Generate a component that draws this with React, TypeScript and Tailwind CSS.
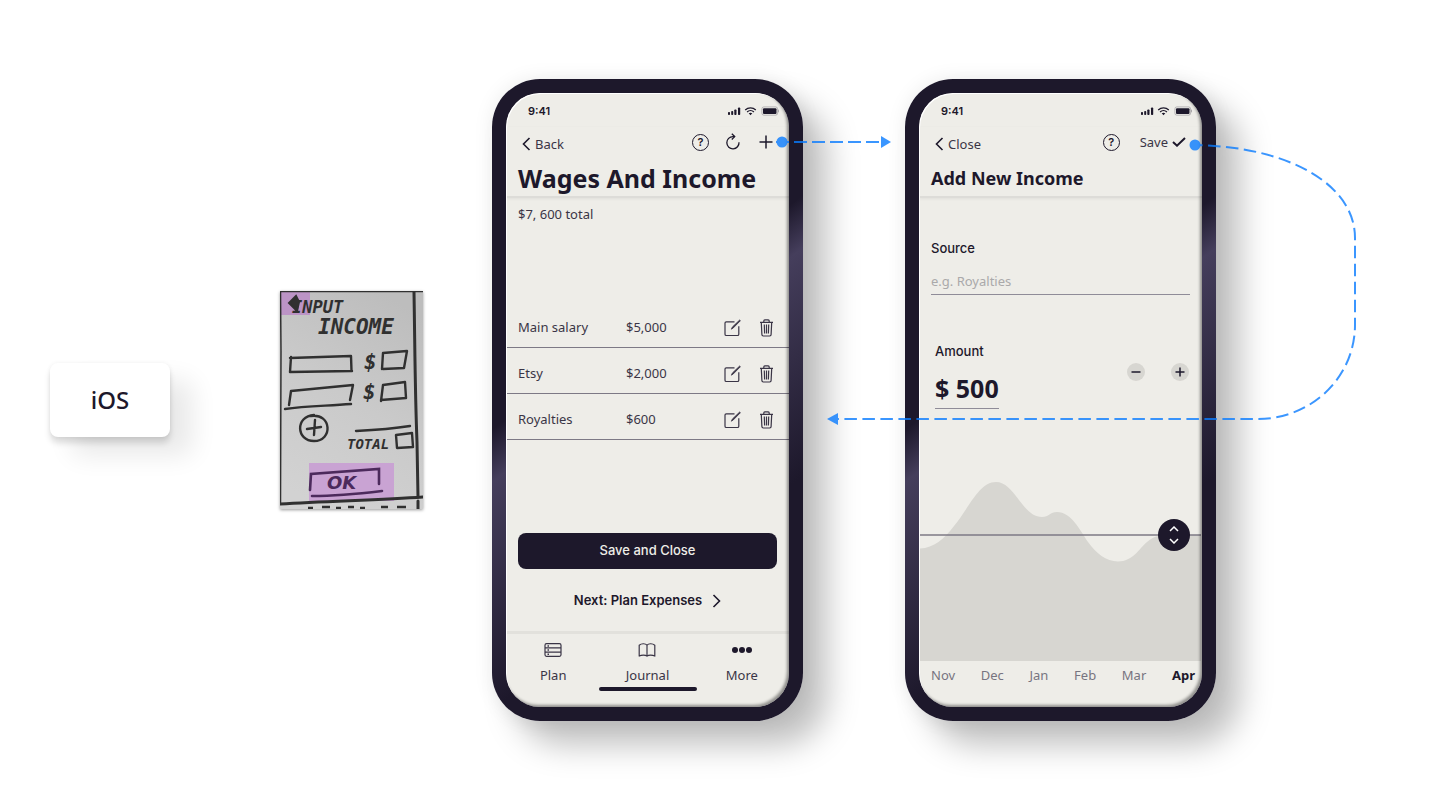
import type { ReactNode } from "react";

const entries = [
  { name: "Main salary", amount: "$5,000" },
  { name: "Etsy", amount: "$2,000" },
  { name: "Royalties", amount: "$600" },
];

const months = ["Nov", "Dec", "Jan", "Feb", "Mar", "Apr"];

function ChevronLeft() {
  return (
    <svg width="9" height="14" viewBox="0 0 9 14" fill="none" stroke="currentColor" strokeWidth="1.6" aria-hidden="true">
      <path d="M7.5 1 1.5 7l6 6" />
    </svg>
  );
}

function ChevronRight() {
  return (
    <svg width="9" height="14" viewBox="0 0 9 14" fill="none" stroke="currentColor" strokeWidth="1.6" aria-hidden="true">
      <path d="m1.5 1 6 6-6 6" />
    </svg>
  );
}

function HelpButton() {
  return (
    <button
      type="button"
      title="Help"
      className="flex size-[17px] items-center justify-center rounded-full border border-[#1d182b] font-['Inter',sans-serif] text-[11px] leading-none font-semibold"
    >
      ?
    </button>
  );
}

function RefreshIcon() {
  return (
    <svg width="16" height="18" viewBox="0 0 16 18" fill="none" stroke="currentColor" strokeWidth="1.3" aria-hidden="true">
      <path d="M14 9.2A6.1 6.1 0 1 1 8 3.6h1.6" />
      <path d="m6.8.8 2.9 2.8-2.9 2.9" />
    </svg>
  );
}

function PlusIcon() {
  return (
    <svg width="14" height="14" viewBox="0 0 14 14" fill="none" stroke="currentColor" strokeWidth="1.5" aria-hidden="true">
      <path d="M7 .5v13M.5 7h13" />
    </svg>
  );
}

function EditIcon() {
  return (
    <svg width="17" height="18" viewBox="0 0 17 18" fill="none" stroke="currentColor" aria-hidden="true">
      <path d="M10.5 2.8H2.3A1.3 1.3 0 0 0 1 4.1v11.1a1.3 1.3 0 0 0 1.3 1.3h11.2a1.3 1.3 0 0 0 1.3-1.3V7.2" strokeWidth="1.2" />
      <path d="m7.4 10.2 1-2.2L15.7 1l.7.7-7.1 7.2z" fill="currentColor" strokeWidth=".8" />
    </svg>
  );
}

function TrashIcon() {
  return (
    <svg width="15" height="18" viewBox="0 0 15 18" fill="none" stroke="currentColor" strokeWidth="1.2" aria-hidden="true">
      <path d="M1 3.4h13M4.8 3.2V1.9c0-.6.4-1 1-1h3.4c.6 0 1 .4 1 1v1.3M2.300 3.600l.6 12c0 .8.6 1.400 1.400 1.400h6.400c.8 0 1.400-.6 1.400-1.400l.6-12M5.300 5.600l.3 9M7.500 5.600v9M9.700 5.600l-.3 9" />
    </svg>
  );
}

function PlanIcon() {
  return (
    <svg width="18" height="14" viewBox="0 0 18 14" fill="none" stroke="currentColor" strokeWidth="1.2" aria-hidden="true">
      <rect x="1" y=".7" width="16" height="12.6" rx="1.5" />
      <path d="M1 4.9h16M1 9.1h16" />
      <path d="M3.500 2.900h1.500M3.500 7h1.500M3.500 11.200h1.500" strokeWidth="1.5" />
    </svg>
  );
}

function JournalIcon() {
  return (
    <svg width="18" height="14" viewBox="0 0 18 14" fill="none" stroke="currentColor" strokeWidth="1.2" strokeLinejoin="round" aria-hidden="true">
      <path d="M9 2.200C7.500.4 3.500.2 1.200 2.200v10.900c2.300-1.300 6.300-1.300 7.800 0 1.500-1.300 5.500-1.300 7.800 0V2.200C14.500.2 10.500.4 9 2.200zM9 2.200v10.900" />
    </svg>
  );
}

function MoreIcon() {
  return (
    <svg width="20" height="14" viewBox="0 0 20 14" fill="#1d182b" aria-hidden="true">
      <circle cx="3" cy="7" r="3" />
      <circle cx="10" cy="7" r="3" />
      <circle cx="17" cy="7" r="3" />
    </svg>
  );
}

function StatusBar() {
  return (
    <div className="flex h-[34px] items-center justify-between pt-0.5 pr-[10px] pl-[22px]">
      <span className="font-['Inter',sans-serif] text-[11px] leading-4 font-semibold">9:41</span>
      <svg width="52" height="10" viewBox="0 0 52 10" aria-hidden="true">
        <g fill="#1d182b">
          <rect x="1" y="6" width="2" height="3" rx=".8" />
          <rect x="4.200" y="5" width="2" height="4" rx=".8" />
          <rect x="7.300" y="3.500" width="2.200" height="5.500" rx=".8" />
          <rect x="11" y="1.500" width="2.200" height="7.500" rx=".8" />
          <path d="m23.500 9.200-1.800-1.900c1-.8 2.600-.8 3.600 0z" />
          <rect x="36" y="2.200" width="13.500" height="5.800" rx="1" />
        </g>
        <g fill="none" stroke="#1d182b" strokeWidth="1.3">
          <path d="M18.200 3.900c3-2.800 7.600-2.800 10.600 0" />
          <path d="M20.100 6c1.900-1.800 4.900-1.800 6.800 0" />
        </g>
        <rect x="34.900" y=".9" width="15.700" height="8.300" rx="2" fill="none" stroke="#1d182b" strokeOpacity=".25" />
        <path d="M51.500 3.700v2.600" stroke="#1d182b" strokeOpacity=".3" />
      </svg>
    </div>
  );
}

function Phone({ label, children }: { label: string; children: ReactNode }) {
  return (
    <section
      aria-label={label}
      className="w-[311px] shrink-0 rounded-[48px] bg-[linear-gradient(143deg,#1d182b_40%,#453e5c_46%,#1d182b_72%)] p-[14px] shadow-[24px_24px_32px_rgba(0,0,0,0.25),0_0_20px_rgba(0,0,0,0.08)]"
    >
      <div className="relative flex min-h-[614px] flex-col overflow-hidden rounded-[34px] bg-[#eeede8]">
        <StatusBar />
        {children}
        <div className="pointer-events-none absolute inset-0 rounded-[34px] shadow-[inset_1px_1px_0_#fff,inset_-2px_-2px_3px_rgba(0,0,0,0.4)]" />
      </div>
    </section>
  );
}

function IncomePhone() {
  return (
    <Phone label="Wages and income">
      <header className="border-b-2 border-[#dddcd8] px-3 pb-px shadow-[0_1px_3px_rgba(0,0,0,0.06)]">
        <div className="flex h-[30px] items-center justify-between pr-1 pl-1">
          <button type="button" className="flex items-center gap-1 pt-1 text-[13px] leading-4">
            <ChevronLeft />
            <span className="text-[#3a3546]">Back</span>
          </button>
          <div className="flex items-center gap-4">
            <HelpButton />
            <button type="button" aria-label="Refresh"><RefreshIcon /></button>
            <button type="button" aria-label="Add income" className="pl-0.5"><PlusIcon /></button>
          </div>
        </div>
        <h1 className="mt-1 text-[25px] leading-[34px] font-bold whitespace-nowrap">Wages And Income</h1>
      </header>
      <p className="px-3 pt-1.5 text-[13px] leading-5 text-[#3a3546]">$7, 600 total</p>
      <table className="mt-[77px] w-full table-fixed border-collapse text-[13px] text-[#3a3546]">
        <tbody>
          {entries.map((entry) => (
            <tr key={entry.name} className="h-[46px] border-b border-[#7d7985]">
              <th scope="row" className="w-[120px] pt-2 pl-3 text-left font-normal">{entry.name}</th>
              <td className="pt-2">{entry.amount}</td>
              <td className="w-[65px] pt-2">
                <div className="flex items-center gap-[18px]">
                  <button type="button" aria-label={`Edit ${entry.name}`}><EditIcon /></button>
                  <button type="button" aria-label={`Delete ${entry.name}`}><TrashIcon /></button>
                </div>
              </td>
            </tr>
          ))}
        </tbody>
      </table>
      <div className="mt-auto flex flex-col items-stretch gap-5 px-3 pb-[18px] font-['Inter',sans-serif]">
        <button type="button" className="h-9 rounded-lg bg-[#1d182b] text-[13px] font-medium text-[#eeede8]">
          Save and Close
        </button>
        <a href="#plan" className="flex h-6 items-center justify-center gap-[10px] text-[13px] font-semibold">
          Next: Plan Expenses
          <ChevronRight />
        </a>
      </div>
      <nav className="border-t-3 border-[#e2e1dc] pb-4">
        <div className="grid grid-cols-3 pt-[9px] text-[13px] leading-5 text-[#3a3546]">
          <a href="#plan" className="flex flex-col items-center gap-2"><PlanIcon />Plan</a>
          <a href="#journal" className="flex flex-col items-center gap-2"><JournalIcon />Journal</a>
          <a href="#more" className="flex flex-col items-center gap-2"><MoreIcon />More</a>
        </div>
        <div className="mx-auto mt-0.5 h-1 w-[98px] rounded-full bg-[#1d182b]" />
      </nav>
    </Phone>
  );
}

function AddIncomePhone() {
  return (
    <Phone label="Add new income">
      <header className="border-b-2 border-[#dddcd8] px-3 pb-px shadow-[0_1px_3px_rgba(0,0,0,0.06)]">
        <div className="flex h-[30px] items-center justify-between pr-1 pl-1">
          <button type="button" className="flex items-center gap-1 pt-1 text-[13px] leading-4">
            <ChevronLeft />
            <span className="text-[#3a3546]">Close</span>
          </button>
          <div className="flex items-center gap-5">
            <HelpButton />
            <button type="button" className="flex items-center gap-1 text-[13px] leading-4">
              <span className="text-[#3a3546]">Save</span>
              <svg width="14" height="10" viewBox="0 0 14 10" fill="none" stroke="currentColor" strokeWidth="2" aria-hidden="true">
                <path d="m1 5 4 3.700L13 1" />
              </svg>
            </button>
          </div>
        </div>
        <h1 className="mt-1 text-lg leading-[34px] font-bold">Add New Income</h1>
      </header>
      <div className="flex flex-col px-3 pt-[38px]">
        <label htmlFor="source" className="font-['Inter',sans-serif] text-[13px] leading-6 font-medium">Source</label>
        <input
          id="source"
          placeholder="e.g. Royalties"
          className="mt-2 h-[27px] w-full border-b border-[#8f8c98] bg-transparent text-[13px] outline-none placeholder:text-[#aaa9aa]"
        />
      </div>
      <div className="flex items-center justify-between pt-11 pr-3 pl-4">
        <div className="flex flex-col">
          <label htmlFor="amount" className="font-['Inter',sans-serif] text-[13px] leading-6 font-medium">Amount</label>
          <input
            id="amount"
            defaultValue="$ 500"
            className="mt-1 h-[42px] w-16 border-b border-[#8f8c98] bg-transparent text-[25px] font-bold outline-none"
          />
        </div>
        <div className="flex gap-[26px] pr-px pb-1">
          <button type="button" aria-label="Decrease amount" className="flex size-[18px] items-center justify-center rounded-full bg-[#d7d6d1]">
            <svg width="10" height="10" viewBox="0 0 10 10" stroke="currentColor" strokeWidth="1.5" aria-hidden="true"><path d="M.5 5h9" /></svg>
          </button>
          <button type="button" aria-label="Increase amount" className="flex size-[18px] items-center justify-center rounded-full bg-[#d7d6d1]">
            <svg width="10" height="10" viewBox="0 0 10 10" stroke="currentColor" strokeWidth="1.5" aria-hidden="true"><path d="M.5 5h9M5 .5v9" /></svg>
          </button>
        </div>
      </div>
      <div className="relative mt-auto pr-px pl-px">
        <svg className="block h-[180px] w-full" viewBox="0 0 281 180" preserveAspectRatio="none" aria-hidden="true">
          <path
            d="M0 67.500C14 67 24 58 34 45 49 27 59 1 76 1c19 0 26 35 46 35 7 0 8-5 15-5 14 0 23 18 31 30 8 11 18 19.500 30 19.500 15 0 21-13 29-19.500 8-7 14-7 24-7h30v126H0z"
            fill="#d7d6d1"
          />
          <path d="M0 54h281" stroke="#7d7985" strokeWidth="1.5" />
        </svg>
        <button
          type="button"
          aria-label="Adjust amount"
          className="absolute top-[38px] right-3 flex size-8 items-center justify-center rounded-full bg-[#1d182b] text-white"
        >
          <svg width="12" height="18" viewBox="0 0 12 18" fill="none" stroke="currentColor" strokeWidth="1.5" aria-hidden="true">
            <path d="m2 5 4-4 4 4M2 13l4 4 4-4" />
          </svg>
        </button>
      </div>
      <div className="flex justify-between pt-1 pr-[7px] pb-[22px] pl-3 text-[13px] leading-5 text-[#777480]">
        {months.map((month) => (
          <button
            key={month}
            type="button"
            className={month === "Apr" ? "font-bold text-[#1d182b]" : ""}
          >
            {month}
          </button>
        ))}
      </div>
    </Phone>
  );
}

function PaperSketch() {
  return (
    <svg
      className="w-[143px] shrink-0 shadow-[0_1px_3px_rgba(0,0,0,0.4)]"
      viewBox="0 0 143 218"
      role="img"
      aria-label="Paper sketch of the income screen"
    >
      <defs>
        <linearGradient id="paper" x1="0.7" y1="0" x2="0.3" y2="1">
          <stop offset="0" stopColor="#bdbdbd" />
          <stop offset="0.5" stopColor="#cacaca" />
          <stop offset="1" stopColor="#d2d2d2" />
        </linearGradient>
        <clipPath id="sheet"><path d="M0 0h143v218H0z" /></clipPath>
      </defs>
      <g clipPath="url(#sheet)">
        <rect width="143" height="218" fill="url(#paper)" />
        <rect width="30" height="24" fill="#bc94c6" />
        <rect x="29" y="172" width="85" height="38" fill="#c9a3d3" />
        <g fill="none" stroke="#303030" strokeWidth="2.4" strokeLinecap="round" strokeLinejoin="round">
          <path d="M0 .5h143" strokeWidth="1.5" />
          <path d="M.5 0 1 60 .5 213" strokeWidth="1.5" />
          <path d="M134 1c1 60 1 100 3 150l1 55M138 210v8" strokeWidth="3" />
          <path d="M0 213c50-3 100-4 143-7" strokeWidth="3" />
          <path d="m11 66-1 15 62-1M10 67l61-2 .5 15" />
          <path d="m102 78 1-16 24-2-3 17-21 1" />
          <path d="m9 114 2-14 62-6-3 15M5 118c20-3 40-3 66-5" />
          <path d="m101 110 2-16 22-3 1 16-25 2" />
          <path d="M34 124c-19 1-18 26 0 26 19 0 18-28-3-25M35 129l-1 15M27 138l14-2" />
          <path d="M76 140c20-1 35-2 54-5M117 157l-1-13 16-2 1 14-16 1" />
        </g>
        <path d="m9 12 7-7 3 6-2 9z" fill="#303030" stroke="#303030" strokeWidth="2" />
        <g fill="#303030" className="font-['DejaVu_Sans_Mono',monospace] font-bold italic">
          <text x="12" y="22" fontSize="17">INPUT</text>
          <text x="38" y="43" fontSize="21">INCOME</text>
          <text x="84" y="78" fontSize="21">$</text>
          <text x="83" y="108" fontSize="21">$</text>
          <text x="67" y="158" fontSize="14">TOTAL</text>
        </g>
        <g fill="none" stroke="#4c2a5c" strokeWidth="2.6" strokeLinecap="round">
          <path d="m30 199 1-16 68-5v15M32 205c25 0 45-2 70-5" />
        </g>
        <text x="47" y="198" fontSize="18" fill="#4c2a5c" className="font-['DejaVu_Sans',sans-serif] font-bold italic">OK</text>
        <path d="M28 217h5M42 216h8M56 217h5M68 216h6M80 217h5M101 216h7M117 216h9" stroke="#303030" strokeWidth="2.5" />
      </g>
    </svg>
  );
}

function Connectors() {
  return (
    <svg
      className="pointer-events-none absolute top-0 left-0 h-[642px] w-[1440px]"
      viewBox="0 79 1440 642"
      fill="none"
      aria-hidden="true"
    >
      <g opacity="0.8" stroke="#0a7cff" strokeWidth="2">
        <path d="M776 142h105" strokeDasharray="13 5" />
        <path d="M1190 145h6C1290 147 1355 185 1355 238V325A97 94 0 0 1 1258 419H838" strokeDasharray="12.500 5.500" />
        <g fill="#0a7cff" stroke="none">
          <circle cx="782" cy="142" r="5.500" />
          <path d="m881 136 10 6-10 6z" />
          <circle cx="1195" cy="145" r="5.500" />
          <path d="m838 413-11 6 11 6z" />
        </g>
      </g>
    </svg>
  );
}

export default function App() {
  return (
    <main className="flex min-h-screen items-center overflow-x-auto bg-white font-['Noto_Sans',sans-serif] text-[#1d182b]">
      <div className="relative flex min-w-[1440px] items-center pl-[50px]">
        <div className="flex h-[74px] w-[120px] shrink-0 items-center justify-center rounded-lg bg-white text-2xl font-medium shadow-[0_0_4px_rgba(0,0,0,0.06),0_6px_6px_rgba(0,0,0,0.13),22px_18px_26px_rgba(0,0,0,0.09)]">
          iOS
        </div>
        <div className="ml-[110px] flex shrink-0"><PaperSketch /></div>
        <div className="ml-[69px] shrink-0"><IncomePhone /></div>
        <div className="ml-[102px] shrink-0"><AddIncomePhone /></div>
        <Connectors />
      </div>
    </main>
  );
}
